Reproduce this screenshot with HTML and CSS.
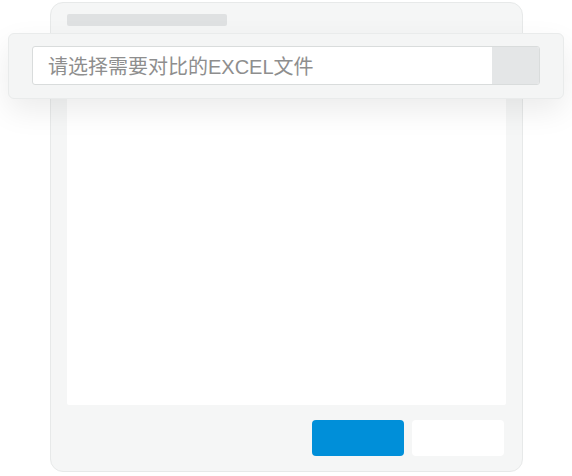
FILE: index.html
```html
<!DOCTYPE html>
<html lang="zh">
<head>
<meta charset="utf-8">
<link rel="stylesheet" href="styles.css">
</head>
<body>
<div class="stage">
  <div class="window">
    <div class="title-bar"></div>
    <div class="content"></div>
    <div class="footer">
      <div class="btn btn-primary"></div>
      <div class="btn btn-secondary"></div>
    </div>
  </div>
  <div class="picker">
    <div class="picker-input">
      <span class="placeholder">请选择需要对比的EXCEL文件</span>
      <span class="picker-btn"></span>
    </div>
  </div>
</div>
</body>
</html>
```
FILE: styles.css
```css
html, body {
  margin: 0;
  padding: 0;
  background: #ffffff;
}
.stage {
  position: relative;
  width: 572px;
  height: 476px;
  overflow: hidden;
  font-family: "Liberation Sans", "Noto Sans CJK SC", sans-serif;
}
.window {
  box-sizing: border-box;
  margin: 2px 0 0 50px;
  width: 473px;
  height: 470px;
  background: #f5f6f6;
  border: 1px solid #e7e9e9;
  border-radius: 13px;
  padding: 11px 16px 15px 16px;
  display: flex;
  flex-direction: column;
}
.title-bar {
  width: 160px;
  height: 12px;
  background: #dfe1e2;
  border-radius: 2px;
  flex: none;
}
.content {
  margin-top: 8px;
  flex: 1;
  background: #ffffff;
  border-radius: 2px;
}
.footer {
  margin-top: 15px;
  display: flex;
  justify-content: flex-end;
  gap: 8px;
  padding-right: 2px;
  flex: none;
}
.btn {
  width: 92px;
  height: 36px;
  border-radius: 4px;
}
.btn-primary {
  background: #008fd9;
}
.btn-secondary {
  background: #ffffff;
}
.picker {
  position: absolute;
  left: 8px;
  top: 33px;
  width: 556px;
  height: 66px;
  box-sizing: border-box;
  background: #f4f5f5;
  border: 1px solid #e9ebeb;
  border-radius: 6px;
  box-shadow: 0 12px 30px rgba(0, 0, 0, 0.08);
  padding: 12px 23px 0 23px;
}
.picker-input {
  box-sizing: border-box;
  height: 39px;
  background: #ffffff;
  border: 1px solid #d9dcdc;
  border-radius: 3px;
  display: flex;
  align-items: stretch;
  overflow: hidden;
}
.placeholder {
  flex: 1;
  padding: 3px 0 0 15px;
  font-size: 20px;
  line-height: 34px;
  color: #8e8e8e;
  font-weight: 400;
}
.picker-btn {
  width: 47px;
  background: #e4e6e7;
}
```
